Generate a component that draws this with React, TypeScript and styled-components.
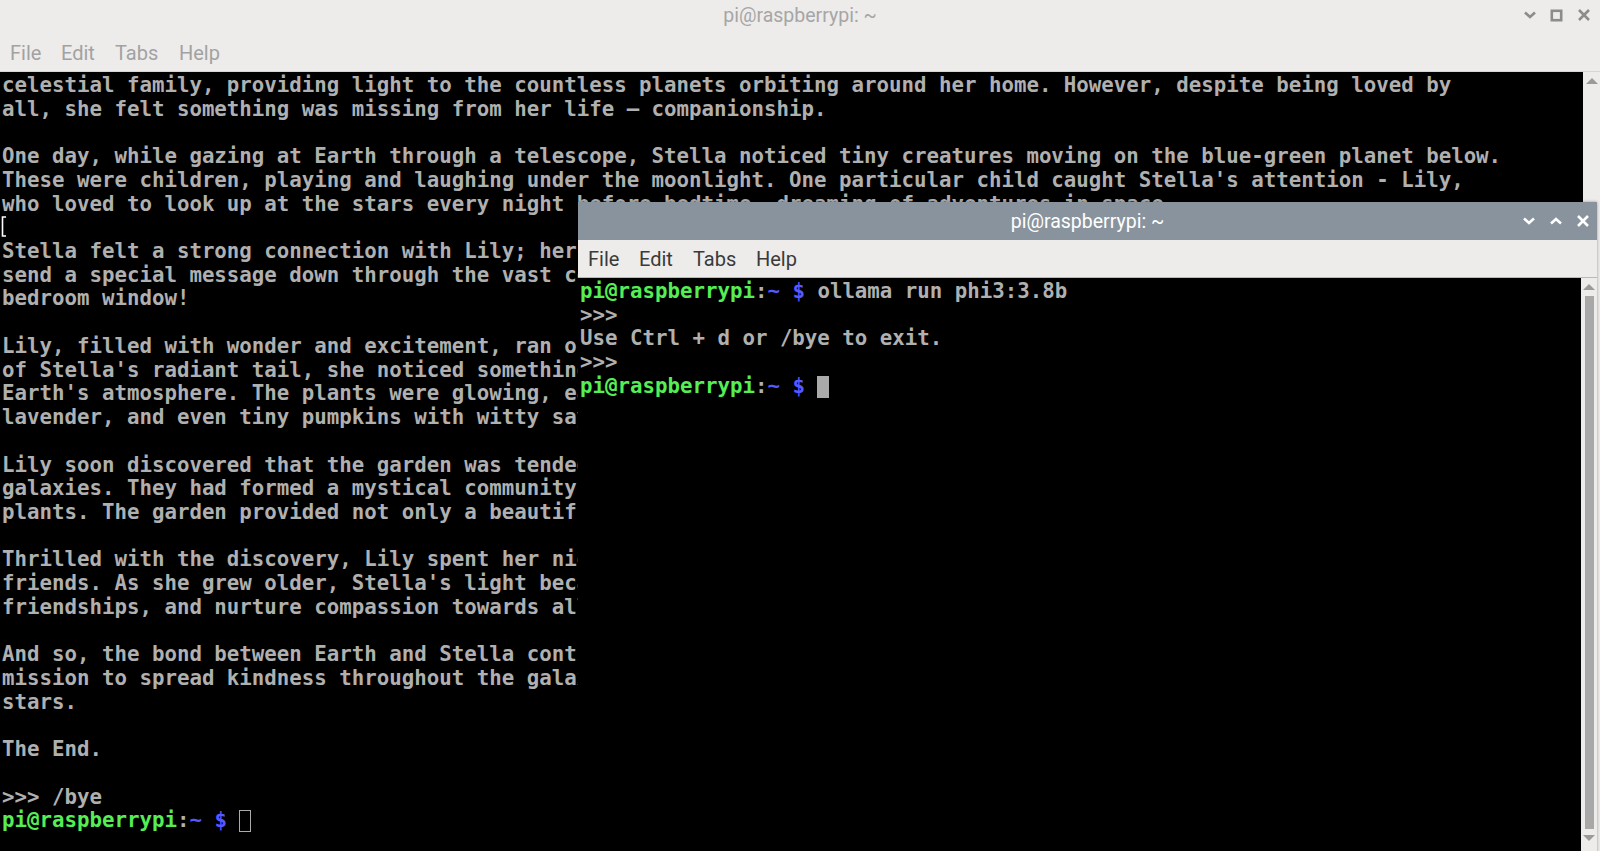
import React from 'react';
import styled, { createGlobalStyle } from 'styled-components';

const GlobalStyle = createGlobalStyle`
    html, body {
        margin: 0;
        padding: 0;
        background: #2b1d4a;
        overflow: hidden;
    }
`

const CELL_H = 23.73;
// columns of the back terminal left of the front window
const VISIBLE_COLS = 47;

const Desktop = styled.div`
    position: relative;
    width: 1600px;
    height: 851px;
    overflow: hidden;
    font-family: Roboto, "Noto Sans", sans-serif;
`

const Window = styled.div`
    width: 1600px;
    height: 851px;
    display: flex;
    flex-direction: column;
    background: #edeceb;
`

const FloatWindow = styled.div`
    position: absolute;
    left: 578px;
    top: 202px;
    width: 1019px;
    height: 680px;
    display: flex;
    flex-direction: column;
    background: #edeceb;
    box-shadow: 0 0 3px rgba(0, 0, 0, 0.35);
`

const TitleBar = styled.div<{ $active?: boolean; $h: number; $pb?: number }>`
    position: relative;
    flex: none;
    height: ${p => p.$h}px;
    padding-bottom: ${p => p.$pb || 0}px;
    box-sizing: border-box;
    display: flex;
    align-items: center;
    justify-content: center;
    background: ${p => (p.$active ? '#88939d' : '#edeceb')};
    color: ${p => (p.$active ? '#ffffff' : '#a6a6a6')};
    font-size: 19.5px;
`

const TitleButtons = styled.div<{ $pb?: number; $pr: number }>`
    position: absolute;
    right: 0;
    top: 0;
    bottom: ${p => p.$pb || 0}px;
    display: flex;
    align-items: center;
    padding-right: ${p => p.$pr}px;
`

const TitleButton = styled.div`
    width: 27px;
    height: 20px;
    display: flex;
    align-items: center;
    justify-content: center;
`

const MenuBar = styled.div<{ $active?: boolean }>`
    flex: none;
    height: 38px;
    display: flex;
    align-items: center;
    padding-left: 10px;
    background: #edeceb;
    border-bottom: 1px solid ${p => (p.$active ? '#b9b9b9' : '#d6d6d6')};
    box-sizing: border-box;
    color: ${p => (p.$active ? '#3a3a3a' : '#a2a2a2')};
    font-size: 20px;
`

const MenuItem = styled.span<{ $w: number }>`
    width: ${p => p.$w}px;
`

const Body = styled.div`
    flex: 1;
    display: flex;
    min-height: 0;
`

const Screen = styled.div`
    position: relative;
    flex: 1;
    background: #000;
    padding: 2px 0 0 2px;
    overflow: hidden;
    font-family: "DejaVu Sans Mono", "Liberation Mono", monospace;
    font-weight: bold;
    font-size: 20.75px;
    line-height: ${CELL_H}px;
    color: #b0b0b0;
    white-space: pre;
`

const Line = styled.div`
    height: ${CELL_H}px;
`

const User = styled.span`
    color: #55ee55;
`

const Path = styled.span`
    color: #5858ff;
`

const BlockCursor = styled.span<{ $hollow?: boolean }>`
    display: inline-block;
    width: 12px;
    height: 22px;
    vertical-align: -5px;
    box-sizing: border-box;
    background: ${p => (p.$hollow ? 'transparent' : '#aaaaaa')};
    border: ${p => (p.$hollow ? '1.5px solid #aaaaaa' : 'none')};
`

const IBeam = styled.svg`
    position: absolute;
    left: 0;
    top: 144px;
`

const Scrollbar = styled.div<{ $w: number }>`
    flex: none;
    width: ${p => p.$w}px;
    display: flex;
    flex-direction: column;
    align-items: center;
    background: #edeceb;
    padding-top: 6px;
`

const Arrow = styled.div<{ $down?: boolean }>`
    width: 0;
    height: 0;
    border-left: 6px solid transparent;
    border-right: 6px solid transparent;
    ${p => (p.$down ? 'border-top: 6px solid #9a9a9a;' : 'border-bottom: 6px solid #9a9a9a;')}
    margin-bottom: 6px;
`

const Thumb = styled.div<{ $h: number }>`
    width: 9px;
    height: ${p => p.$h}px;
    background: #a8a8a8;
    margin-bottom: 6px;
`

const ChevronDown = ({ color }: { color: string }) => (
    <svg width="14" height="10" viewBox="0 0 14 10">
        <path d="M2 2.5 L7 7 L12 2.5" fill="none" stroke={color} strokeWidth="2.6" />
    </svg>
)

const ChevronUp = ({ color }: { color: string }) => (
    <svg width="14" height="10" viewBox="0 0 14 10">
        <path d="M2 7.5 L7 3 L12 7.5" fill="none" stroke={color} strokeWidth="2.6" />
    </svg>
)

const CloseIcon = ({ color }: { color: string }) => (
    <svg width="14" height="14" viewBox="0 0 14 14">
        <path d="M2 2 L12 12 M12 2 L2 12" fill="none" stroke={color} strokeWidth="2.6" />
    </svg>
)

const MaxIcon = ({ color }: { color: string }) => (
    <svg width="13" height="13" viewBox="0 0 13 13">
        <rect x="1.8" y="1.8" width="9.4" height="9.4" fill="none" stroke={color} strokeWidth="2.6" />
    </svg>
)

const Prompt = () => (
    <>
        <User>pi@raspberrypi</User>:<Path>~ $</Path>{' '}
    </>
)

const story = [
    "celestial family, providing light to the countless planets orbiting around her home. However, despite being loved by",
    "all, she felt something was missing from her life \u2013 companionship.",
    "",
    "One day, while gazing at Earth through a telescope, Stella noticed tiny creatures moving on the blue-green planet below.",
    "These were children, playing and laughing under the moonlight. One particular child caught Stella's attention - Lily,",
    "who loved to look up at the stars every night before bedtime, dreaming of adventures in space.",
    "",
    "Stella felt a strong connection with Lily; her heart glowed brighter each night. She decided to",
    "send a special message down through the vast cosmos - a magical garden that would bloom outside Lily's",
    "bedroom window!",
    "",
    "Lily, filled with wonder and excitement, ran outside to explore the garden. As she stepped into the glow",
    "of Stella's radiant tail, she noticed something magical: the plants were not native to",
    "Earth's atmosphere. The plants were glowing, each one unique - sparkling roses, shimmering",
    "lavender, and even tiny pumpkins with witty sayings carved into them.",
    "",
    "Lily soon discovered that the garden was tended by friendly alien creatures from distant",
    "galaxies. They had formed a mystical community dedicated to protecting these extraordinary",
    "plants. The garden provided not only a beautiful sight but also a place of friendship.",
    "",
    "Thrilled with the discovery, Lily spent her nights in the garden, learning from her new alien",
    "friends. As she grew older, Stella's light became a symbol of hope, inspiring Lily to build",
    "friendships, and nurture compassion towards all living beings.",
    "",
    "And so, the bond between Earth and Stella continued to grow, as Lily carried on Stella's",
    "mission to spread kindness throughout the galaxy, one garden at a time under the twinkling",
    "stars.",
    "",
    "The End.",
    "",
    ">>> /bye",
]

const App = () => {
    // rows from 6 down sit behind the front window, only their left part shows
    const rows = story.map((l, i) => (i >= 6 ? l.slice(0, VISIBLE_COLS) : l));

    return (
        <Desktop>
            <GlobalStyle />
            <Window>
                <TitleBar $h={34} $pb={4}>
                    pi@raspberrypi: ~
                    <TitleButtons $pb={4} $pr={3}>
                        <TitleButton><ChevronDown color="#8c8c8c" /></TitleButton>
                        <TitleButton><MaxIcon color="#8c8c8c" /></TitleButton>
                        <TitleButton><CloseIcon color="#8c8c8c" /></TitleButton>
                    </TitleButtons>
                </TitleBar>
                <MenuBar>
                    <MenuItem $w={51}>File</MenuItem>
                    <MenuItem $w={54}>Edit</MenuItem>
                    <MenuItem $w={64}>Tabs</MenuItem>
                    <MenuItem $w={60}>Help</MenuItem>
                </MenuBar>
                <Body>
                    <Screen>
                        {rows.map((l, i) => (
                            <Line key={i}>{l}</Line>
                        ))}
                        <Line>
                            <Prompt />
                            <BlockCursor $hollow />
                        </Line>
                        <IBeam width="8" height="21" viewBox="0 0 8 21">
                            <path d="M6 1 L2.5 1 L2.5 20 L6 20" fill="none" stroke="#ffffff" strokeWidth="1.6" />
                        </IBeam>
                    </Screen>
                    <Scrollbar $w={17}>
                        <Arrow />
                    </Scrollbar>
                </Body>
            </Window>

            <FloatWindow>
                <TitleBar $active $h={38}>
                    pi@raspberrypi: ~
                    <TitleButtons $pr={1}>
                        <TitleButton><ChevronDown color="#ffffff" /></TitleButton>
                        <TitleButton><ChevronUp color="#ffffff" /></TitleButton>
                        <TitleButton><CloseIcon color="#ffffff" /></TitleButton>
                    </TitleButtons>
                </TitleBar>
                <MenuBar $active>
                    <MenuItem $w={51}>File</MenuItem>
                    <MenuItem $w={54}>Edit</MenuItem>
                    <MenuItem $w={63}>Tabs</MenuItem>
                    <MenuItem $w={60}>Help</MenuItem>
                </MenuBar>
                <Body>
                    <Screen>
                        <Line><Prompt />ollama run phi3:3.8b</Line>
                        <Line>{'>>>'}</Line>
                        <Line>Use Ctrl + d or /bye to exit.</Line>
                        <Line>{'>>>'}</Line>
                        <Line>
                            <Prompt />
                            <BlockCursor />
                        </Line>
                    </Screen>
                    <Scrollbar $w={16}>
                        <Arrow />
                        <Thumb $h={533} />
                        <Arrow $down />
                    </Scrollbar>
                </Body>
            </FloatWindow>
        </Desktop>
    );
}

export default App;
